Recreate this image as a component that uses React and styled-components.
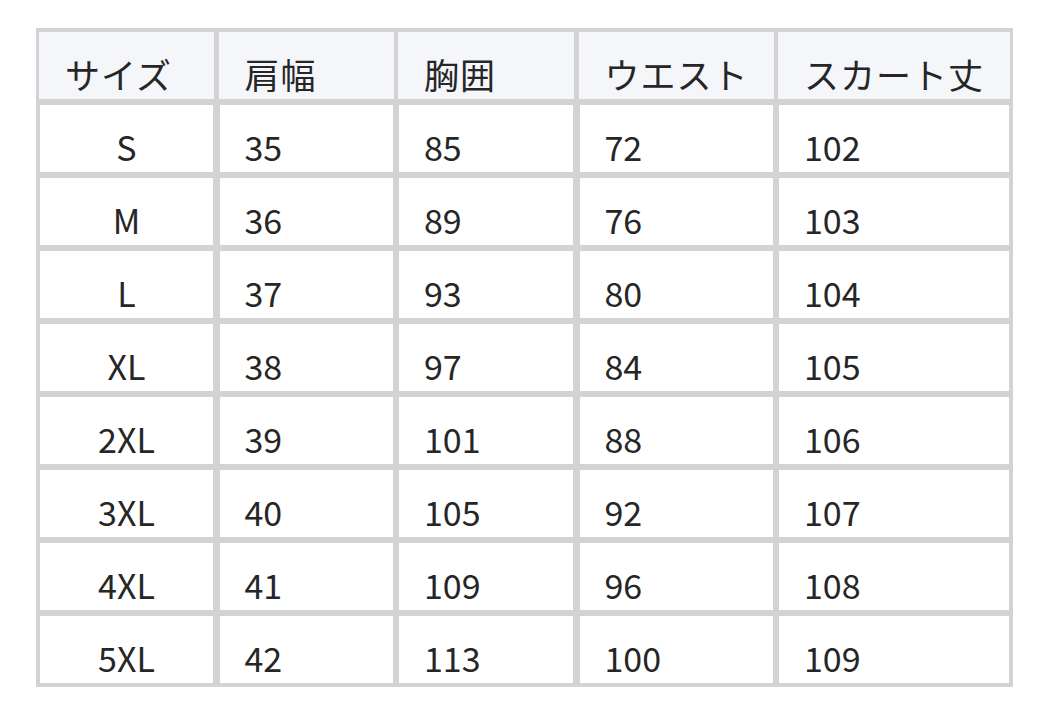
import React from 'react';
import styled, { createGlobalStyle } from 'styled-components';

const GlobalStyle = createGlobalStyle`
  html, body {
    margin: 0;
    padding: 0;
    background: #ffffff;
  }
  body {
    font-family: 'Noto Sans CJK JP', 'Noto Sans', sans-serif;
    color: #262626;
  }
`;

const Page = styled.div`
  padding: 28px 0 0 36px;
`;

const Table = styled.div`
  display: grid;
  grid-template-columns: 173px 173px 174px 193px 230px;
  grid-auto-rows: 67px;
  column-gap: 6.5px;
  row-gap: 6px;
  width: max-content;
  border: 4px solid #d3d3d3;
  background: #d3d3d3;
`;

const HeaderCell = styled.div`
  display: flex;
  align-items: flex-end;
  padding: 0 0 4px 26px;
  background: #f5f6fa;
  font-size: 35px;
  line-height: 1.2;
  letter-spacing: 1px;
  box-sizing: border-box;
  margin: 0 -1px;
`;

const Cell = styled.div`
  display: flex;
  align-items: flex-end;
  justify-content: ${({ $center }) => ($center ? 'center' : 'flex-start')};
  padding: ${({ $center }) => ($center ? '0 0 4px 0' : '0 0 4px 25px')};
  background: #ffffff;
  font-size: 34px;
  line-height: 1.2;
  box-sizing: border-box;
`;

const headers = ['サイズ', '肩幅', '胸囲', 'ウエスト', 'スカート丈'];

const rows = [
  ['S', '35', '85', '72', '102'],
  ['M', '36', '89', '76', '103'],
  ['L', '37', '93', '80', '104'],
  ['XL', '38', '97', '84', '105'],
  ['2XL', '39', '101', '88', '106'],
  ['3XL', '40', '105', '92', '107'],
  ['4XL', '41', '109', '96', '108'],
  ['5XL', '42', '113', '100', '109'],
];

export default function App() {
  return (
    <Page>
      <GlobalStyle />
      <Table>
        {headers.map((h) => (
          <HeaderCell key={h}>{h}</HeaderCell>
        ))}
        {rows.map((row) =>
          row.map((value, i) => (
            <Cell key={row[0] + i} $center={i === 0}>
              {value}
            </Cell>
          ))
        )}
      </Table>
    </Page>
  );
}
